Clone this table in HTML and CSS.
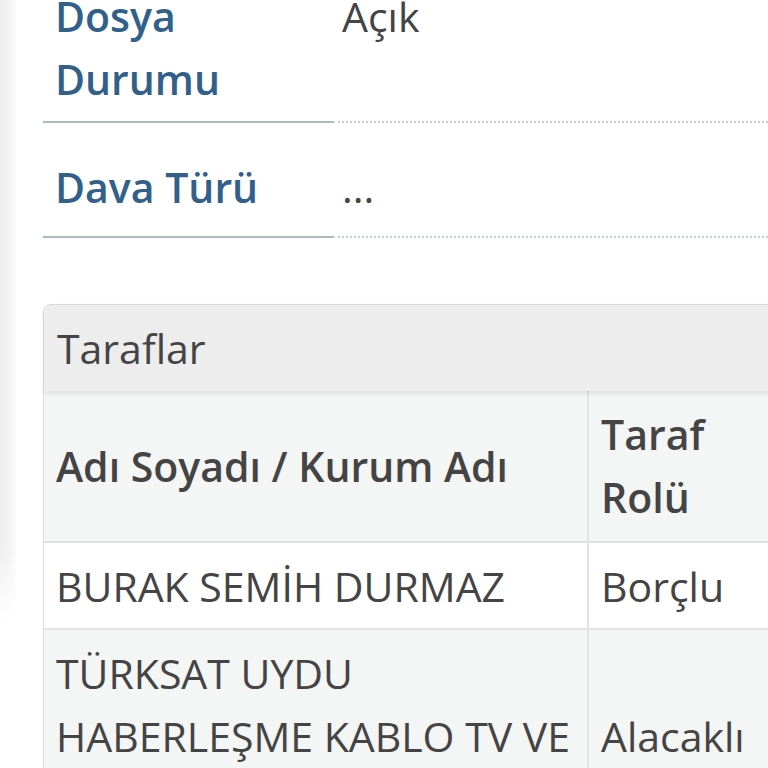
FILE: index.html
```html
<!DOCTYPE html>
<html lang="tr">
<head>
<meta charset="utf-8">
<title>Dosya</title>
<link rel="stylesheet" href="styles.css">
</head>
<body>
<div class="page">
  <div class="edge"></div>
  <main class="content">
    <dl class="details">
      <div class="detail-row detail-row-first">
        <dt class="detail-label">Dosya Durumu</dt>
        <dd class="detail-value">Açık</dd>
      </div>
      <div class="detail-row">
        <dt class="detail-label">Dava Türü</dt>
        <dd class="detail-value">...</dd>
      </div>
    </dl>

    <section class="panel">
      <div class="panel-heading">Taraflar</div>
      <table class="parties">
        <colgroup>
          <col class="col-name">
          <col class="col-role">
        </colgroup>
        <thead>
          <tr>
            <th>Adı Soyadı / Kurum Adı</th>
            <th>Taraf Rolü</th>
          </tr>
        </thead>
        <tbody>
          <tr>
            <td>BURAK SEMİH DURMAZ</td>
            <td>Borçlu</td>
          </tr>
          <tr class="striped">
            <td>TÜRKSAT UYDU HABERLEŞME KABLO TV VE İŞLETME A.Ş.</td>
            <td>Alacaklı</td>
          </tr>
        </tbody>
      </table>
    </section>
  </main>
</div>
</body>
</html>
```

FILE: styles.css
```css
html, body {
  margin: 0;
  padding: 0;
  overflow: hidden;
  background: #ffffff;
}

body {
  font-family: "Open Sans", "Noto Sans", sans-serif;
  font-size: 41px;
  line-height: 63px;
  color: #444444;
  width: 768px;
  height: 768px;
}

.page {
  display: flex;
  align-items: flex-start;
  width: 900px;
}

.edge {
  flex: 0 0 16px;
  height: 620px;
  background:
    linear-gradient(to bottom, rgba(255,255,255,0) 88%, #ffffff 100%),
    linear-gradient(to right, #eeeeee 0%, #f4f4f4 70%, #fbfbfb 100%);
}

.content {
  flex: 1;
  padding-left: 27px;
}

.details {
  margin: -48px 0 0 0;
  padding: 0;
}

.detail-row {
  display: flex;
}

.detail-label {
  flex: 0 0 290px;
  box-sizing: border-box;
  padding: 33px 12px 17px 12px;
  margin: 0;
  font-weight: 600;
  color: #31608b;
  border-bottom: 2px solid #a9bcbf;
}

.detail-value {
  flex: 1;
  margin: 0;
  padding: 33px 12px 17px 9px;
  border-bottom: 2px dotted #c6d0d2;
}

.detail-row-first .detail-label,
.detail-row-first .detail-value {
  padding-bottom: 10px;
}

.panel {
  margin-top: 66px;
  border: 1px solid #dddddd;
  border-radius: 8px 0 0 0;
  width: 800px;
}

.panel-heading {
  position: relative;
  z-index: 1;
  background: #ededed;
  padding: 12px 13px 11px 13px;
  border-radius: 7px 0 0 0;
  box-shadow: 0 2px 5px rgba(0, 0, 0, 0.1);
  color: #444444;
}

.parties {
  border-collapse: collapse;
  table-layout: fixed;
  width: 744px;
}

.col-name { width: 544px; }
.col-role { width: 200px; }

.parties th,
.parties td {
  text-align: left;
  vertical-align: middle;
  padding: 12px 12px;
  border-left: 2px solid #e3e3e3;
}

.parties th:first-child,
.parties td:first-child {
  border-left: none;
}

.parties th {
  font-weight: 600;
  background: #f4f5f5;
  border-bottom: 2px solid #e0e0e0;
}

.parties td {
  font-weight: 400;
  padding-bottom: 10px;
  border-top: 2px solid #e3e3e3;
}

.parties tr.striped td {
  background: #f4f5f5;
}
```
